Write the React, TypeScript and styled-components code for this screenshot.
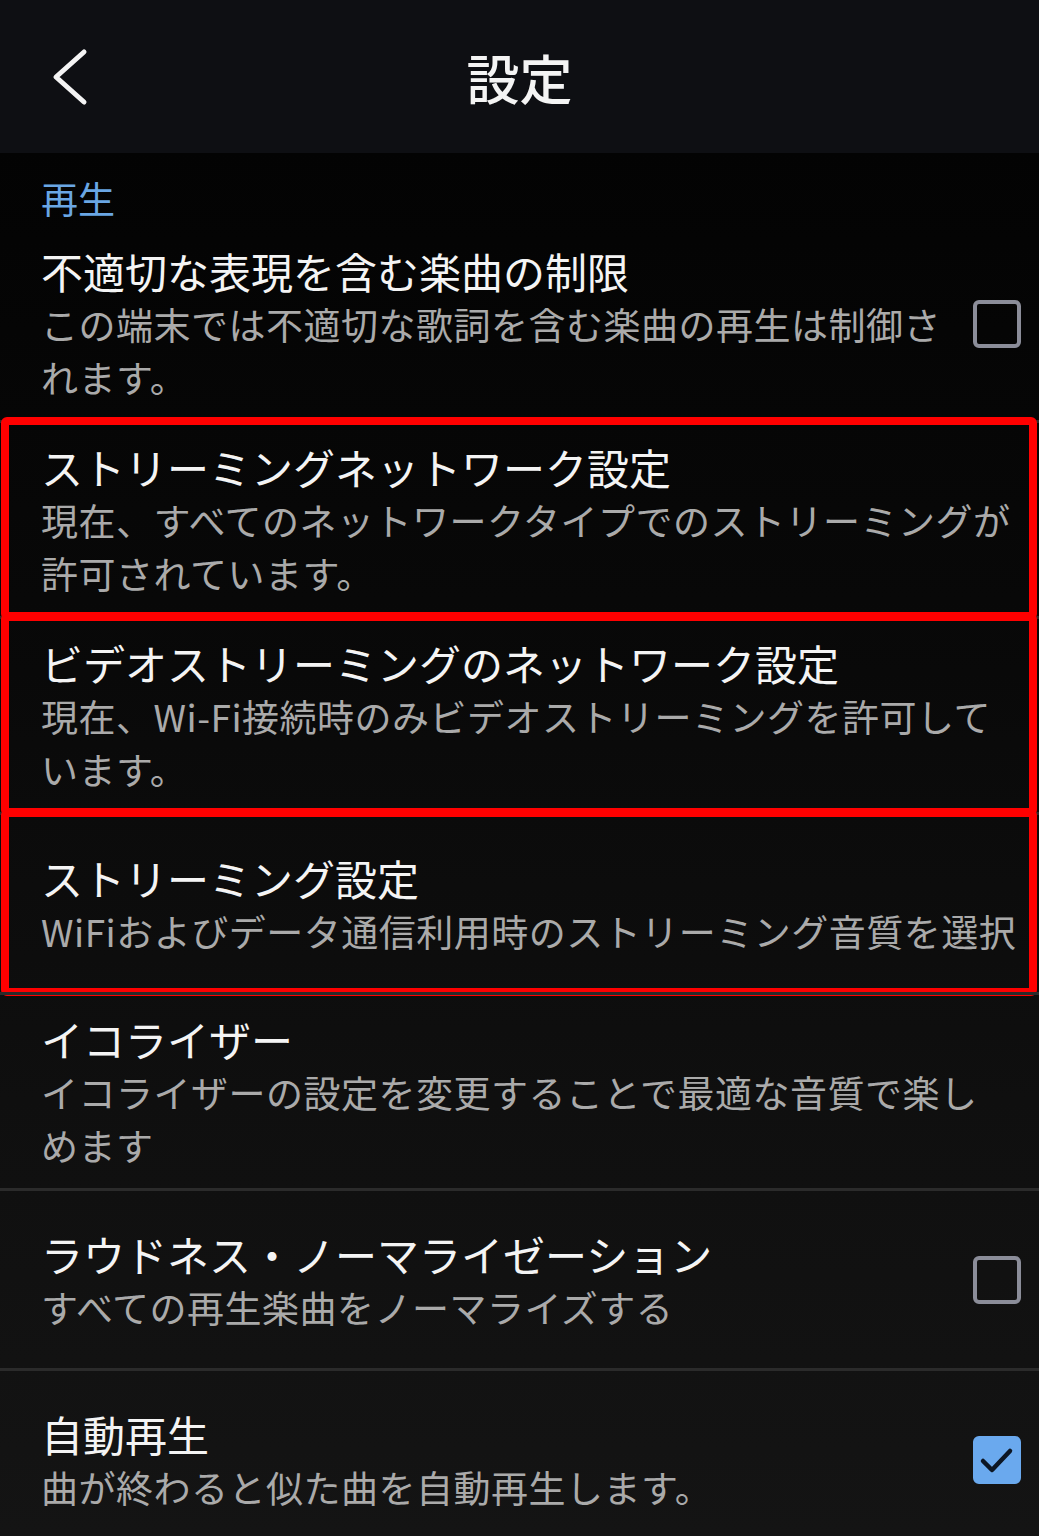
import styled, { createGlobalStyle } from "styled-components";

interface Setting {
  title: string;
  description: string;
  control?: "off" | "on";
  highlighted?: boolean;
}

const settings: Setting[] = [
  {
    title: "不適切な表現を含む楽曲の制限",
    description: "この端末では不適切な歌詞を含む楽曲の再生は制御さ\nれます。",
    control: "off",
  },
  {
    title: "ストリーミングネットワーク設定",
    description: "現在、すべてのネットワークタイプでのストリーミングが\n許可されています。",
    highlighted: true,
  },
  {
    title: "ビデオストリーミングのネットワーク設定",
    description: "現在、Wi-Fi接続時のみビデオストリーミングを許可して\nいます。",
    highlighted: true,
  },
  {
    title: "ストリーミング設定",
    description: "WiFiおよびデータ通信利用時のストリーミング音質を選択",
    highlighted: true,
  },
  {
    title: "イコライザー",
    description: "イコライザーの設定を変更することで最適な音質で楽し\nめます",
  },
  {
    title: "ラウドネス・ノーマライゼーション",
    description: "すべての再生楽曲をノーマライズする",
    control: "off",
  },
  {
    title: "自動再生",
    description: "曲が終わると似た曲を自動再生します。",
    control: "on",
  },
];

function App() {
  return (
    <>
      <GlobalStyle />
      <PageStyle>
        <HeaderStyle>
          <BackButton aria-label="戻る">
            <svg width="40" height="60" viewBox="0 0 40 60">
              <polyline
                points="32,5 4,30 32,55"
                fill="none"
                stroke="#f4f4f4"
                strokeWidth="5"
                strokeLinecap="round"
                strokeLinejoin="round"
              />
            </svg>
          </BackButton>
          <HeaderTitle>設定</HeaderTitle>
          <span />
        </HeaderStyle>

        <SectionTitle>再生</SectionTitle>

        <ListStyle>
          {settings.map((item) => (
            <ItemStyle key={item.title} $highlighted={!!item.highlighted}>
              <ItemText>
                <ItemTitle>{item.title}</ItemTitle>
                <ItemDescription>{item.description}</ItemDescription>
              </ItemText>
              {item.control && (
                <CheckBox $checked={item.control === "on"}>
                  {item.control === "on" && (
                    <svg width="40" height="40" viewBox="0 0 40 40">
                      <polyline
                        points="6,21 15,30 33,11"
                        fill="none"
                        stroke="#0c1624"
                        strokeWidth="4.5"
                        strokeLinecap="round"
                        strokeLinejoin="round"
                      />
                    </svg>
                  )}
                </CheckBox>
              )}
            </ItemStyle>
          ))}
        </ListStyle>
      </PageStyle>
    </>
  );
}

const GlobalStyle = createGlobalStyle`
  body {
    margin: 0;
    background: #141414;
    font-family: "Noto Sans CJK JP", "Noto Sans", sans-serif;
  }
`;

const PageStyle = styled.div`
  width: 1039px;
  min-height: 1536px;
  overflow: hidden;
  background: linear-gradient(to bottom, #030303 150px, #080808 600px, #0f0f0f 1100px, #141414 1536px);
`;

const HeaderStyle = styled.header`
  height: 153px;
  background: #0e0f13;
  display: grid;
  grid-template-columns: 1fr auto 1fr;
  align-items: center;
`;

const BackButton = styled.button`
  border: 0;
  background: none;
  padding: 0 0 0 52px;
  display: flex;
  align-items: center;
  cursor: pointer;
  height: 60px;
  justify-self: start;
`;

const HeaderTitle = styled.h1`
  margin: 0;
  font-size: 53px;
  font-weight: 500;
  color: #f4f4f4;
  line-height: 60px;
`;

const SectionTitle = styled.h2`
  margin: 0 0 3px;
  padding: 19px 0 0 41px;
  font-size: 37px;
  font-weight: 400;
  line-height: 52px;
  color: #6aa6e4;
`;

const ListStyle = styled.div`
  display: flex;
  flex-direction: column;
`;

const ItemStyle = styled.div<{ $highlighted: boolean }>`
  position: relative;
  display: flex;
  align-items: center;
  gap: 24px;
  min-height: 180px;
  padding: 16px 18px 16px 41px;
  box-sizing: border-box;
  border-top: 3px solid #2b2b2b;

  &:first-child {
    border-top: 0;
  }

  &::after {
    content: "";
    display: ${({ $highlighted }) => ($highlighted ? "block" : "none")};
    position: absolute;
    top: -6px;
    bottom: -4px;
    left: 1px;
    right: 2px;
    border: 8px solid #ff0000;
    border-radius: 6px;
    pointer-events: none;
  }
`;

const ItemText = styled.div`
  flex: 1;
  min-width: 0;
`;

const ItemTitle = styled.div`
  font-size: 42px;
  line-height: 55px;
  color: #f4f4f4;
`;

const ItemDescription = styled.div`
  font-size: 37px;
  line-height: 53px;
  letter-spacing: 0.5px;
  color: #aaaaaa;
  white-space: pre-line;
`;

const CheckBox = styled.span<{ $checked: boolean }>`
  flex-shrink: 0;
  width: 48px;
  height: 48px;
  box-sizing: border-box;
  border-radius: 6px;
  border: 4px solid ${({ $checked }) => ($checked ? "#6aa9ee" : "#8b8d99")};
  background: ${({ $checked }) => ($checked ? "#6aa9ee" : "transparent")};
  display: flex;
  align-items: center;
  justify-content: center;
`;

export default App;
